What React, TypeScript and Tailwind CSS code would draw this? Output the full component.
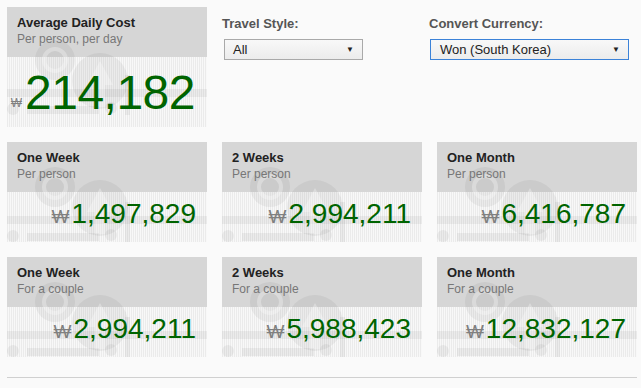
import React from "react";

const FONT = { fontFamily: '"Liberation Sans", Arial, sans-serif' };

function Watermark({ tall }: { tall?: boolean }) {
  const dy = tall ? 8 : 0;
  return (
    <svg
      className="absolute inset-0 pointer-events-none"
      width="200"
      height={tall ? 120 : 100}
      viewBox={`0 0 200 ${tall ? 120 : 100}`}
    >
      <g fill="#000" fillOpacity="0.05">
        <circle cx="48" cy={45 + dy} r="20" />
        <circle cx="93" cy={66 + dy} r="28" />
        <rect x="0" y={74 + dy} width="200" height="8" />
        <rect x="20" y={91 + dy} width="72" height="8" />
        <circle cx="6" cy={94 + dy} r="6" />
        <circle cx="104" cy={93 + dy} r="6" />
        <rect x="118" y={60 + dy} width="5" height="40" />
      </g>
      <circle cx="48" cy={45 + dy} r="11" fill="none" stroke="#fff" strokeOpacity="0.3" strokeWidth="4" />
      <path
        d={`M93 ${46 + dy} L80 ${70 + dy} L88 ${70 + dy} L88 ${92 + dy} L98 ${92 + dy} L98 ${70 + dy} L106 ${70 + dy} Z`}
        fill="#fff"
        fillOpacity="0.3"
      />
    </svg>
  );
}

function Card({
  title,
  sub,
  value,
}: {
  title: string;
  sub: string;
  value: string;
}) {
  return (
    <div className="relative w-[200px] h-[100px] flex flex-col bg-[repeating-linear-gradient(90deg,#ebebeb_0px,#ebebeb_1px,#f8f8f8_1px,#f8f8f8_2px)]">
      <div className="h-[50px] bg-[#d6d6d6]" />
      <Watermark />
      <div className="absolute left-0 top-0 right-0 z-10 px-[10px] pt-[8px]">
        <div className="text-[13px] leading-[16px] font-bold text-[#222]">{title}</div>
        <div className="text-[12px] leading-[16px] text-[#777]">{sub}</div>
      </div>
      <div className="relative z-10 flex-1 flex justify-end items-baseline pr-[11px] pt-[8px]">
        <span className="text-[19px] leading-none text-[#808080] mr-[2px]">₩</span>
        <span className="text-[28px] leading-none text-[#006400]">{value}</span>
      </div>
    </div>
  );
}

function FakeSelect({
  text,
  width,
  focused,
  padLeft,
}: {
  text: string;
  width: string;
  focused?: boolean;
  padLeft: string;
}) {
  return (
    <div
      className={`${width} h-[21px] flex items-center justify-between border ${
        focused ? "border-[#3b82d8]" : "border-[#a9a9a9]"
      } bg-[linear-gradient(#f8f8f8,#ececec)] ${padLeft} pr-[8px]`}
    >
      <span className="text-[13px] leading-none text-[#222]">{text}</span>
      <span className="text-[8px] leading-none text-[#222]">▼</span>
    </div>
  );
}

export default function App() {
  return (
    <div className="w-[641px] h-[388px] bg-[#fafafa] pl-[7px] pt-[7px]" style={FONT}>
      <div className="flex items-start">
        <div className="relative w-[200px] h-[120px] flex flex-col bg-[repeating-linear-gradient(90deg,#ebebeb_0px,#ebebeb_1px,#f8f8f8_1px,#f8f8f8_2px)]">
          <div className="h-[50px] bg-[#d6d6d6]" />
          <Watermark tall />
          <div className="absolute left-0 top-0 right-0 z-10 px-[10px] pt-[8px]">
            <div className="text-[13px] leading-[16px] font-bold text-[#222]">
              Average Daily Cost
            </div>
            <div className="text-[12px] leading-[16px] text-[#777]">
              Per person, per day
            </div>
          </div>
          <div className="relative z-10 flex-1 flex justify-end items-end pr-[12px] pb-[10px]">
            <span className="text-[12px] leading-none text-[#808080] mr-[3px] mb-[8px]">₩</span>
            <span className="text-[48px] leading-none text-[#006400] tracking-[-0.5px]">
              214,182
            </span>
          </div>
        </div>
        <div className="ml-[15px] w-[207px] pt-[9px]">
          <div className="text-[13px] leading-[16px] font-bold text-[#555]">Travel Style:</div>
          <div className="mt-[7px] ml-[2px]">
            <FakeSelect text="All" width="w-[139px]" padLeft="pl-[8px]" />
          </div>
        </div>
        <div className="w-[208px] pt-[9px]">
          <div className="text-[13px] leading-[16px] font-bold text-[#555]">
            Convert Currency:
          </div>
          <div className="mt-[7px] ml-[1px]">
            <FakeSelect
              text="Won (South Korea)"
              width="w-[199px]"
              focused
              padLeft="pl-[9px]"
            />
          </div>
        </div>
      </div>

      <div className="flex gap-[15px] mt-[15px]">
        <Card title="One Week" sub="Per person" value="1,497,829" />
        <Card title="2 Weeks" sub="Per person" value="2,994,211" />
        <Card title="One Month" sub="Per person" value="6,416,787" />
      </div>
      <div className="flex gap-[15px] mt-[15px]">
        <Card title="One Week" sub="For a couple" value="2,994,211" />
        <Card title="2 Weeks" sub="For a couple" value="5,988,423" />
        <Card title="One Month" sub="For a couple" value="12,832,127" />
      </div>
      <div className="mt-[20px] w-[630px] h-px bg-[#d0d0d0]" />
    </div>
  );
}
